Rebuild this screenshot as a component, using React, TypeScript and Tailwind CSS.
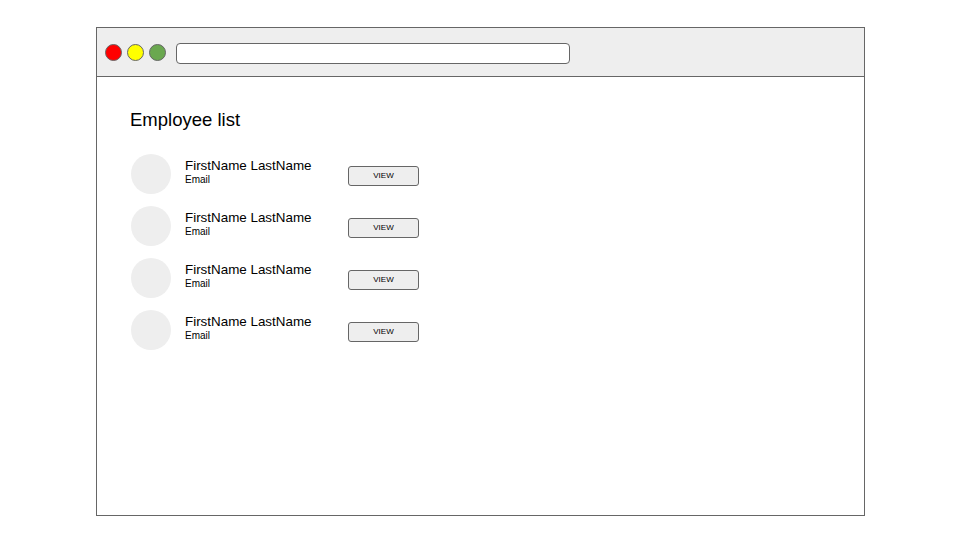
import React from "react";

const rows = [0, 1, 2, 3];

export default function App() {
  return (
    <div className="w-[960px] h-[540px] bg-white pt-[27px] pl-[96px]" style={{ fontFamily: '"Liberation Sans", Arial, sans-serif' }}>
      <div className="w-[769px] h-[489px] border border-[#666666] bg-white flex flex-col">
        <div className="h-[49px] shrink-0 bg-[#eeeeee] border-b border-[#666666] flex items-center pl-[8px]">
          <div className="w-[17px] h-[17px] rounded-full bg-[#ff0000] border border-[#666666]" />
          <div className="w-[17px] h-[17px] rounded-full bg-[#ffff00] border border-[#666666] ml-[5px]" />
          <div className="w-[17px] h-[17px] rounded-full bg-[#6aa84f] border border-[#666666] ml-[5px]" />
          <div className="w-[394px] h-[21px] rounded-[4px] bg-white border border-[#666666] ml-[10px] mt-[2px]" />
        </div>
        <div className="pl-[33px] pt-[32px]">
          <div className="text-[18.5px] leading-[22px] text-black">Employee list</div>
          <div className="mt-[23px] flex flex-col gap-[12px] pl-[1px]">
            {rows.map((i) => (
              <div key={i} className="flex items-center h-[40px]">
                <div className="w-[40px] h-[40px] rounded-full bg-[#eeeeee]" />
                <div className="ml-[14px] w-[163px] flex flex-col -mt-[5px]">
                  <div className="text-[13.4px] leading-[15px] text-black">FirstName LastName</div>
                  <div className="text-[10px] leading-[13px] text-black">Email</div>
                </div>
                <div className="w-[71px] h-[20px] rounded-[3px] bg-[#eeeeee] border border-[#666666] flex items-center justify-center text-[8px] font-normal text-black mt-[4px]">
                  VIEW
                </div>
              </div>
            ))}
          </div>
        </div>
      </div>
    </div>
  );
}
